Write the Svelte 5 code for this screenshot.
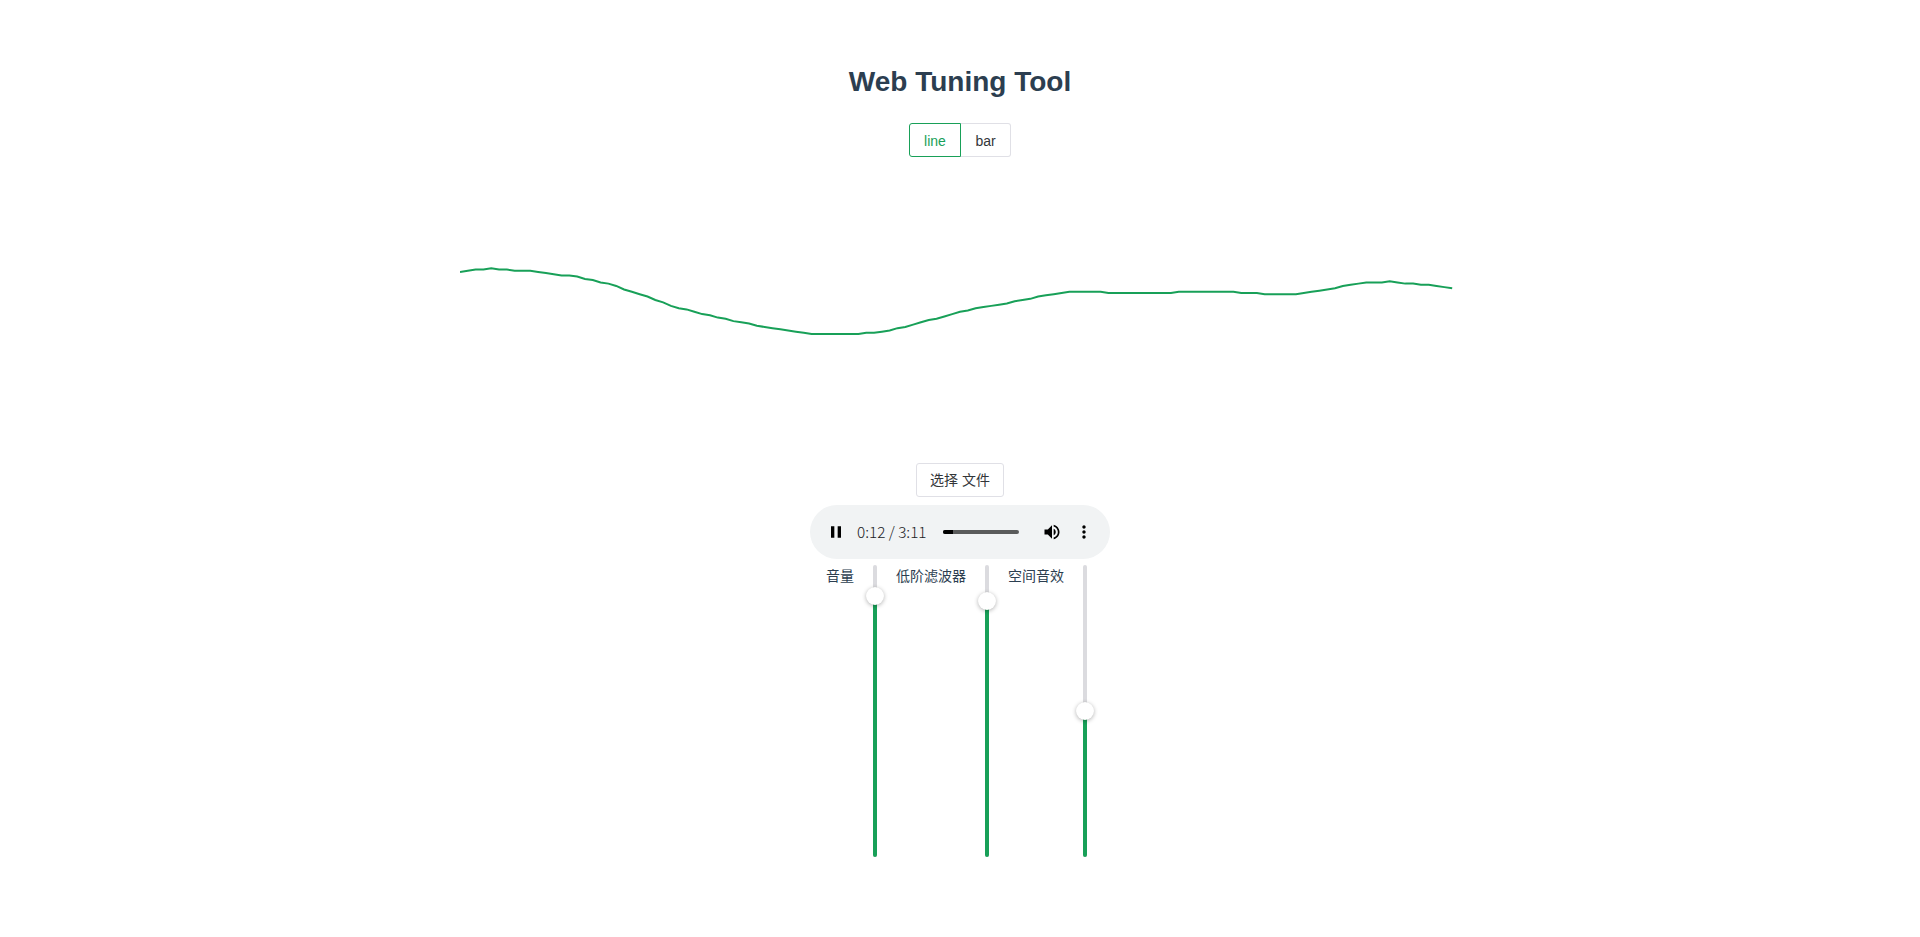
<script>
  const step = 1000 / 128;
  const unit = 150 / 128;
  const samples = [
    0, -1, -2, -2, -3, -2, -2, -1, -1, -1, 0, 1, 2, 3, 3, 4, 6, 7, 9, 10, 12, 15, 17, 19, 21, 24,
    26, 29, 31, 32, 34, 36, 37, 39, 40, 42, 43, 44, 46, 47, 48, 49, 50, 51, 52, 53, 53, 53, 53, 53,
    53, 53, 52, 52, 51, 50, 48, 47, 45, 43, 41, 40, 38, 36, 34, 33, 31, 30, 29, 28, 27, 25, 24, 23,
    21, 20, 19, 18, 17, 17, 17, 17, 17, 18, 18, 18, 18, 18, 18, 18, 18, 18, 17, 17, 17, 17, 17, 17,
    17, 17, 18, 18, 18, 19, 19, 19, 19, 19, 18, 17, 16, 15, 14, 12, 11, 10, 9, 9, 9, 8, 9, 10, 10,
    11, 11, 12, 13, 14
  ];
  const points = samples.map((v, i) => `${i * step},${(114.9 + v * unit).toFixed(2)}`).join(' ');

  let mode = $state('line');
  const sliders = [
    { label: '音量', top: 31 },
    { label: '低阶滤波器', top: 36 },
    { label: '空间音效', top: 146 }
  ];
</script>

<main>
  <h1>Web Tuning Tool</h1>
  <div class="modes">
    <button class:active={mode === 'line'} onclick={() => (mode = 'line')}>line</button>
    <button class:active={mode === 'bar'} onclick={() => (mode = 'bar')}>bar</button>
  </div>
  <svg class="wave" width="1000" height="300" viewBox="0 0 1000 300">
    <polyline {points} fill="none" stroke="#18a058" stroke-width="2" />
  </svg>
  <button class="file">选择 文件</button>
  <div class="player">
    <svg class="pause" width="24" height="24" viewBox="0 0 24 24"><path d="M6 19h4V5H6v14zm8-14v14h4V5h-4z" /></svg>
    <span class="time">0:12 / 3:11</span>
    <div class="track"><div class="played"></div></div>
    <svg class="volume" width="24" height="24" viewBox="0 0 24 24"><path d="M3 9v6h4l5 5V4L7 9H3zm13.500 3c0-1.770-1.020-3.290-2.500-4.030v8.050c1.480-.730 2.500-2.250 2.500-4.020zM14 3.230v2.060c2.890.860 5 3.540 5 6.710s-2.110 5.850-5 6.710v2.060c4.010-.910 7-4.490 7-8.770s-2.990-7.860-7-8.770z" /></svg>
    <svg class="more" width="24" height="24" viewBox="0 0 24 24"><path d="M12 8c1.100 0 2-.900 2-2s-.900-2-2-2-2 .900-2 2 .900 2 2 2zm0 2c-1.100 0-2 .900-2 2s.900 2 2 2 2-.900 2-2-.900-2-2-2zm0 6c-1.100 0-2 .900-2 2s.900 2 2 2 2-.900 2-2-.900-2-2-2z" /></svg>
  </div>
  <div class="sliders">
    {#each sliders as s}
      <div class="control">
        <span>{s.label}</span>
        <div class="rail">
          <div class="fill" style="height: {292 - s.top}px"></div>
          <div class="handle" style="top: {s.top - 9}px"></div>
        </div>
      </div>
    {/each}
  </div>
</main>

<style>
  :global(body) {
    background: #fff;
  }
  main {
    display: flex;
    flex-direction: column;
    align-items: center;
    padding-top: 61px;
    font-family: 'Liberation Sans', 'Noto Sans CJK SC', sans-serif;
    font-size: 14px;
    color: #2c3e50;
  }
  h1 {
    margin: 0;
    height: 62px;
    line-height: 42px;
    font-size: 28px;
    font-weight: 700;
    white-space: nowrap;
  }
  button {
    box-sizing: border-box;
    height: 34px;
    padding: 0;
    border: 1px solid #e0e0e6;
    border-radius: 3px;
    background: #fff;
    color: #333639;
    font: inherit;
    line-height: 32px;
  }
  .modes {
    display: flex;
  }
  .modes button {
    width: 50px;
    padding-top: 2px;
    line-height: 30px;
    border-left: 0;
    border-radius: 0 3px 3px 0;
  }
  .modes button:first-child {
    width: 52px;
    border-left: 1px solid #e0e0e6;
    border-radius: 3px 0 0 3px;
  }
  .modes button.active,
  .modes button.active:first-child {
    border-color: #18a058;
    color: #18a058;
  }
  .wave {
    display: block;
    margin-bottom: 6px;
  }
  .file {
    width: 88px;
  }
  .player {
    display: flex;
    align-items: center;
    box-sizing: border-box;
    width: 300px;
    height: 54px;
    margin-top: 8px;
    padding: 0 16px;
    border-radius: 27px;
    background: #f1f3f4;
  }
  .player svg {
    flex: none;
    width: 20px;
    height: 20px;
    fill: #000;
  }
  .time {
    width: 72px;
    margin-left: 11px;
    font-family: 'Noto Sans CJK SC', sans-serif;
    font-weight: 300;
    font-size: 15.3px;
    line-height: 20px;
    margin-top: -2px;
    color: #202124;
    white-space: nowrap;
  }
  .track {
    width: 76px;
    height: 4px;
    margin-left: 14px;
    border-radius: 2px;
    background: #5a5b5b;
    overflow: hidden;
  }
  .played {
    width: 10px;
    height: 4px;
    background: #000;
  }
  .player .volume {
    margin-left: 23px;
  }
  .player .more {
    margin-left: 12px;
  }
  .sliders {
    display: flex;
    gap: 19px;
    width: 261px;
    margin: 6px 7px 0 0;
  }
  .control {
    display: flex;
    gap: 19px;
  }
  .control span {
    line-height: 22px;
    white-space: nowrap;
  }
  .rail {
    position: relative;
    display: flex;
    align-items: flex-end;
    width: 4px;
    height: 292px;
    border-radius: 2px;
    background: #dbdbdf;
  }
  .fill {
    width: 4px;
    border-radius: 2px;
    background: #18a058;
  }
  .handle {
    position: absolute;
    left: -7px;
    width: 18px;
    height: 18px;
    border-radius: 50%;
    background: #fff;
    box-shadow:
      0 1px 4px 0 rgba(0, 0, 0, 0.3),
      inset 0 0 1px 0 rgba(0, 0, 0, 0.05);
  }
</style>
